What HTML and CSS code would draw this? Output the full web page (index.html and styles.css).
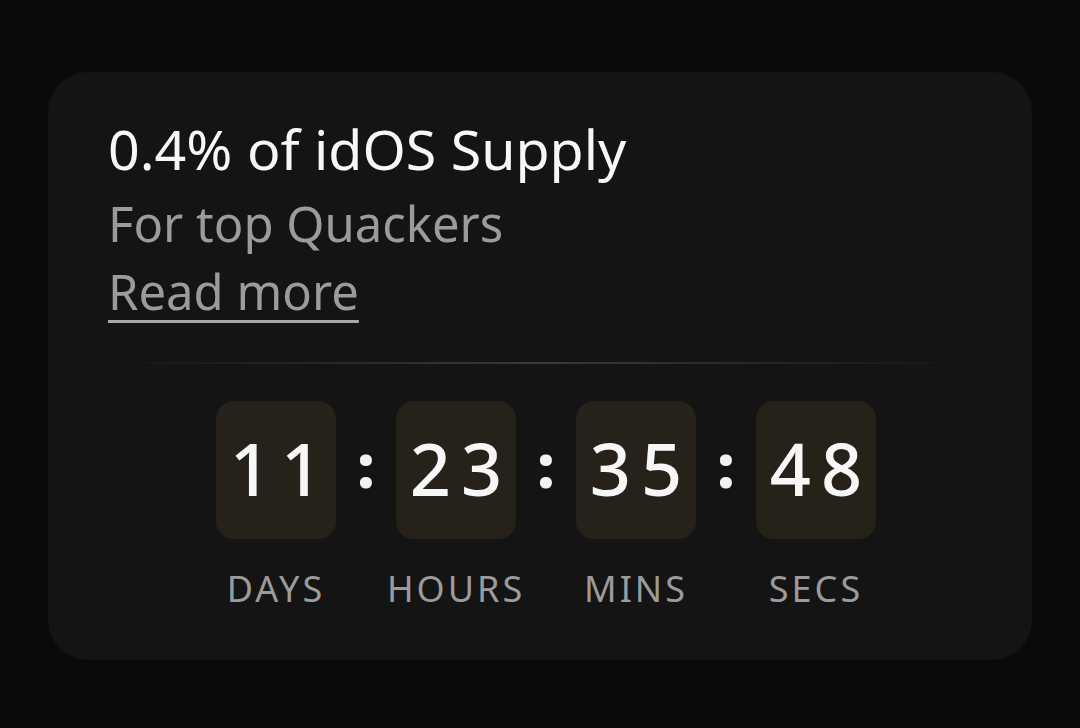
FILE: index.html
```html
<!DOCTYPE html>
<html lang="en">
<head>
    <meta charset="UTF-8">
    <meta name="viewport" content="width=device-width, initial-scale=1.0">
    <title>idOS Supply</title>
    <link rel="stylesheet" href="styles.css">
</head>
<body>
    <div class="card">
        <div class="title">0.4% of idOS Supply</div>
        <div class="subtitle">For top Quackers</div>
        <a href="#" class="read-more">Read more</a>
        <div class="divider"></div>
        <div class="timer">
            <div class="unit">
                <div class="box">11</div>
                <div class="label">DAYS</div>
            </div>
            <div class="colon">:</div>
            <div class="unit">
                <div class="box">23</div>
                <div class="label">HOURS</div>
            </div>
            <div class="colon">:</div>
            <div class="unit">
                <div class="box">35</div>
                <div class="label">MINS</div>
            </div>
            <div class="colon">:</div>
            <div class="unit">
                <div class="box">48</div>
                <div class="label">SECS</div>
            </div>
        </div>
    </div>
</body>
</html>
```

FILE: styles.css
```css
body {
    margin: 0;
    padding: 72px 48px;
    font-family: "Noto Sans", "Open Sans", sans-serif;
    background-color: #0a0a0a;
    color: #f5f5f5;
}
.card {
    background-color: #141414;
    border-radius: 40px;
    padding: 41px 60px 47px;
    display: flex;
    flex-direction: column;
    align-items: flex-start;
}
.title {
    font-size: 55.5px;
    line-height: 72px;
    font-weight: 400;
    color: #f7f7f7;
}
.subtitle {
    margin-top: 4px;
    font-size: 49px;
    line-height: 68px;
    color: #9b9b9b;
}
.read-more {
    font-size: 49px;
    line-height: 68px;
    color: #9b9b9b;
    text-decoration: underline;
    text-decoration-thickness: 3px;
    text-underline-offset: 10px;
    text-decoration-color: #a8a8a8;
}
.divider {
    align-self: stretch;
    height: 2px;
    margin-top: 37px;
    background: linear-gradient(to right, transparent, #3a3a3a 50%, transparent);
}
.timer {
    display: flex;
    align-items: flex-start;
    margin-top: 37px;
    margin-left: 108px;
}
.unit {
    width: 120px;
    display: flex;
    flex-direction: column;
    align-items: center;
}
.box {
    width: 120px;
    height: 138px;
    border-radius: 18px;
    background-color: #26221a;
    display: flex;
    align-items: center;
    justify-content: center;
    font-size: 72px;
    font-weight: 500;
    letter-spacing: 10px;
    padding-left: 10px;
    padding-bottom: 4px;
    box-sizing: border-box;
    color: #f7f7f7;
}
.colon {
    width: 60px;
    height: 138px;
    display: flex;
    align-items: center;
    justify-content: center;
    font-size: 58px;
    font-weight: 700;
    -webkit-text-stroke: 2px #f2f2f2;
    padding-bottom: 12px;
    box-sizing: border-box;
    color: #f2f2f2;
}
.label {
    margin-top: 26px;
    font-size: 36px;
    line-height: 48px;
    letter-spacing: 3px;
    color: #9b9b9b;
    white-space: nowrap;
}
```
